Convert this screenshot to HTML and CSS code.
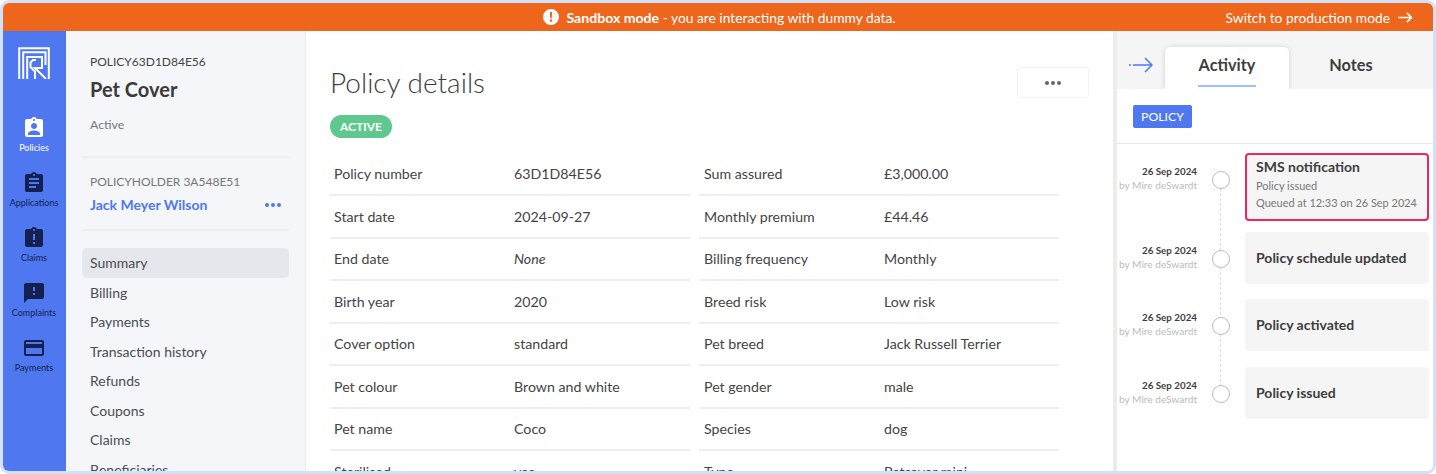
FILE: index.html
```html
<!DOCTYPE html>
<html lang="en">
<head>
<meta charset="UTF-8">
<meta name="viewport" content="width=device-width, initial-scale=1.0">
<title>Policy details</title>
<link rel="stylesheet" href="styles.css">
</head>
<body>
<div class="frame">

    <div class="banner">
        <span></span>
        <div class="banner-message">
            <svg class="banner-icon" viewBox="0 0 16 16"><path fill="#fff" fill-rule="evenodd" d="M8 0a8 8 0 1 0 0 16A8 8 0 0 0 8 0zM6.9 3h2.2l-.3 6.2H7.2L6.9 3zM8 10.300a1.300 1.300 0 1 1 0 2.600 1.300 1.300 0 0 1 0-2.600z"/></svg>
            <span><strong>Sandbox mode</strong> - you are interacting with dummy data.</span>
        </div>
        <a class="banner-link" href="#">Switch to production mode
            <svg class="banner-arrow" viewBox="0 0 16 12"><path fill="none" stroke="#fff" stroke-width="1.800" d="M0 6h14.500M9.500 1l5 5-5 5"/></svg>
        </a>
    </div>

    <div class="app">
        <nav class="rail">
            <svg class="logo" viewBox="0 0 32 32"><path fill="none" stroke="#fff" stroke-width="2" d="M1.200 32V1.200h29.600V32M5.200 32V5.200h22.300V18M9.200 32V10H24v11h-7l11 11M17 32v-7.500L12.500 20v-4.500l2.500-2.500h3"/></svg>
            <a class="rail-item rail-item-active" href="#">
                <svg viewBox="0 0 24 24"><path d="M19 3h-4.180C14.400 1.840 13.300 1 12 1c-1.300 0-2.400.84-2.820 2H5c-1.100 0-2 .9-2 2v14c0 1.100.9 2 2 2h14c1.100 0 2-.9 2-2V5c0-1.100-.9-2-2-2zm-7 0c.55 0 1 .45 1 1s-.45 1-1 1-1-.45-1-1 .45-1 1-1zm0 4c1.660 0 3 1.340 3 3s-1.340 3-3 3-3-1.340-3-3 1.340-3 3-3zm6 12H6v-1.400c0-2 4-3.100 6-3.100s6 1.100 6 3.100V19z"/></svg>
                Policies
            </a>
            <a class="rail-item" href="#">
                <svg viewBox="0 0 24 24"><path d="M19 3h-4.180C14.400 1.840 13.300 1 12 1c-1.300 0-2.400.84-2.820 2H5c-1.100 0-2 .9-2 2v14c0 1.100.9 2 2 2h14c1.100 0 2-.9 2-2V5c0-1.100-.9-2-2-2zm-7 0c.55 0 1 .45 1 1s-.45 1-1 1-1-.45-1-1 .45-1 1-1zm2 14H7v-2h7v2zm3-4H7v-2h10v2zm0-4H7V7h10v2z"/></svg>
                Applications
            </a>
            <a class="rail-item" href="#">
                <svg viewBox="0 0 24 24"><path d="M19 3h-4.180C14.400 1.840 13.300 1 12 1c-1.300 0-2.400.84-2.820 2H5c-1.100 0-2 .9-2 2v14c0 1.100.9 2 2 2h14c1.100 0 2-.9 2-2V5c0-1.100-.9-2-2-2zm-6 15h-2v-2h2v2zm0-4h-2V8h2v6zm-1-9c-.55 0-1-.45-1-1s.45-1 1-1 1 .45 1 1-.45 1-1 1z"/></svg>
                Claims
            </a>
            <a class="rail-item" href="#">
                <svg viewBox="0 0 24 24"><path d="M20 2H4c-1.100 0-1.990.9-1.990 2L2 22l4-4h14c1.100 0 2-.9 2-2V4c0-1.100-.9-2-2-2zm-7 12h-2v-2h2v2zm0-4h-2V6h2v4z"/></svg>
                Complaints
            </a>
            <a class="rail-item" href="#">
                <svg viewBox="0 0 24 24"><path d="M20 4H4c-1.110 0-1.990.89-1.990 2L2 18c0 1.110.89 2 2 2h16c1.110 0 2-.89 2-2V6c0-1.110-.89-2-2-2zm0 14H4v-6h16v6zm0-10H4V6h16v2z"/></svg>
                Payments
            </a>
        </nav>

        <aside class="subnav">
            <div class="subnav-head">
                <div class="policy-ref">POLICY63D1D84E56</div>
                <h2 class="policy-name">Pet Cover</h2>
                <div class="policy-state">Active</div>
            </div>
            <div class="holder">
                <div class="holder-ref">POLICYHOLDER 3A548E51</div>
                <div class="holder-row">
                    <a class="holder-name" href="#">Jack Meyer Wilson</a>
                    <span class="dots dots-blue"><i></i><i></i><i></i></span>
                </div>
            </div>
            <div class="subnav-links">
                <a class="subnav-link subnav-link-active" href="#">Summary</a>
                <a class="subnav-link" href="#">Billing</a>
                <a class="subnav-link" href="#">Payments</a>
                <a class="subnav-link" href="#">Transaction history</a>
                <a class="subnav-link" href="#">Refunds</a>
                <a class="subnav-link" href="#">Coupons</a>
                <a class="subnav-link" href="#">Claims</a>
                <a class="subnav-link" href="#">Beneficiaries</a>
            </div>
        </aside>

        <main class="details">
            <div class="details-head">
                <h1>Policy details</h1>
                <button class="more-btn"><span class="dots"><i></i><i></i><i></i></span></button>
            </div>
            <span class="badge">ACTIVE</span>
            <div class="fields">
                <div class="field"><span>Policy number</span><span>63D1D84E56</span></div>
                <div class="field"><span>Sum assured</span><span>£3,000.00</span></div>
                <div class="field"><span>Start date</span><span>2024-09-27</span></div>
                <div class="field"><span>Monthly premium</span><span>£44.46</span></div>
                <div class="field"><span>End date</span><span><em>None</em></span></div>
                <div class="field"><span>Billing frequency</span><span>Monthly</span></div>
                <div class="field"><span>Birth year</span><span>2020</span></div>
                <div class="field"><span>Breed risk</span><span>Low risk</span></div>
                <div class="field"><span>Cover option</span><span>standard</span></div>
                <div class="field"><span>Pet breed</span><span>Jack Russell Terrier</span></div>
                <div class="field"><span>Pet colour</span><span>Brown and white</span></div>
                <div class="field"><span>Pet gender</span><span>male</span></div>
                <div class="field"><span>Pet name</span><span>Coco</span></div>
                <div class="field"><span>Species</span><span>dog</span></div>
                <div class="field"><span>Sterilised</span><span>yes</span></div>
                <div class="field"><span>Type</span><span>Petsaver mini</span></div>
            </div>
        </main>

        <section class="activity">
            <div class="tabs">
                <svg class="collapse" viewBox="0 0 24 16"><path fill="none" stroke="#4f78f0" stroke-width="1.500" d="M4 8h19M16 1l7 7-7 7"/><circle cx="1" cy="8" r="1" fill="#4f78f0"/></svg>
                <div class="tab tab-active">Activity</div>
                <div class="tab">Notes</div>
            </div>
            <div class="filters"><span class="filter">POLICY</span></div>
            <div class="timeline">
                <div class="event">
                    <div class="event-meta"><b>26 Sep 2024</b><span>by Mire deSwardt</span></div>
                    <div class="event-node"></div>
                    <div class="event-card event-card-selected">
                        <h4>SMS notification</h4>
                        <p>Policy issued</p>
                        <p>Queued at 12:33 on 26 Sep 2024</p>
                    </div>
                </div>
                <div class="event">
                    <div class="event-meta"><b>26 Sep 2024</b><span>by Mire deSwardt</span></div>
                    <div class="event-node"></div>
                    <div class="event-card"><h4>Policy schedule updated</h4></div>
                </div>
                <div class="event">
                    <div class="event-meta"><b>26 Sep 2024</b><span>by Mire deSwardt</span></div>
                    <div class="event-node"></div>
                    <div class="event-card"><h4>Policy activated</h4></div>
                </div>
                <div class="event event-last">
                    <div class="event-meta"><b>26 Sep 2024</b><span>by Mire deSwardt</span></div>
                    <div class="event-node"></div>
                    <div class="event-card"><h4>Policy issued</h4></div>
                </div>
            </div>
        </section>
    </div>
</div>
</body>
</html>
```

FILE: styles.css
```css
* {
    box-sizing: border-box;
}
body {
    margin: 0;
    background-color: #fff;
    font-family: Lato, "Liberation Sans", sans-serif;
    color: #3d3d3d;
}
a {
    color: inherit;
    text-decoration: none;
}
.frame {
    width: 1436px;
    height: 474px;
    display: flex;
    flex-direction: column;
    border: 3px solid #d3e0fa;
    border-radius: 9px;
    overflow: hidden;
}

/* top banner */
.banner {
    flex: none;
    height: 28px;
    display: grid;
    grid-template-columns: 1fr auto 1fr;
    align-items: center;
    background-color: #ee661c;
    color: #fff;
    font-size: 13.800px;
}
.banner strong {
    font-size: 14.100px;
}
.banner-message {
    display: flex;
    align-items: center;
    gap: 7px;
    margin-left: 3px;
}
.banner-icon {
    width: 16px;
    height: 16px;
}
.banner-link {
    justify-self: end;
    display: flex;
    align-items: center;
    gap: 8px;
    padding-right: 20px;
}
.banner-arrow {
    width: 15px;
    height: 11px;
}

.app {
    flex: 1;
    min-height: 0;
    display: flex;
}

/* blue icon rail */
.rail {
    flex: none;
    width: 63px;
    padding-right: 1px;
    display: flex;
    flex-direction: column;
    align-items: center;
    background-color: #4f78f0;
}
.logo {
    width: 32px;
    height: 32px;
    margin-top: 16px;
    margin-bottom: 25px;
}
.rail-item {
    height: 55px;
    display: flex;
    flex-direction: column;
    align-items: center;
    color: #14204f;
    font-size: 9px;
    line-height: 12px;
    gap: 2px;
    padding-top: 12px;
}
.rail-item svg {
    width: 24px;
    height: 24px;
    fill: #14204f;
}
.rail-item-active {
    color: #fff;
}
.rail-item-active svg {
    fill: #fff;
}

/* policy sub navigation */
.subnav {
    flex: none;
    width: 240px;
    padding: 0 16px;
    background-color: #f5f6f9;
    border-right: 1px solid #e9ebf0;
    overflow: hidden;
}
.subnav-head {
    height: 127px;
    padding: 23px 8px 0;
    border-bottom: 2px solid #eceef2;
}
.policy-ref {
    font-size: 12px;
    line-height: 16px;
    color: #444;
}
.policy-name {
    margin: 7px 0 0;
    font-size: 20px;
    line-height: 24px;
    font-weight: 700;
    color: #3a3a3a;
}
.policy-state {
    margin-top: 16px;
    font-size: 12.300px;
    line-height: 16px;
    color: #777;
}
.holder {
    height: 73px;
    padding: 16px 8px 0;
    border-bottom: 2px solid #eceef2;
}
.holder-ref {
    font-size: 12px;
    line-height: 16px;
    color: #777;
}
.holder-row {
    display: flex;
    align-items: center;
    justify-content: space-between;
    margin-top: 5px;
}
.holder-name {
    font-size: 14px;
    line-height: 20px;
    font-weight: 700;
    color: #4f78f0;
}
.dots {
    display: inline-flex;
    gap: 2px;
}
.dots i {
    width: 4px;
    height: 4px;
    border-radius: 50%;
    background-color: #666;
}
.dots-blue i {
    background-color: #4f78f0;
}
.subnav-links {
    margin-top: 17px;
    display: flex;
    flex-direction: column;
}
.subnav-link {
    flex: none;
    height: 29.500px;
    line-height: 30px;
    padding-left: 8px;
    font-size: 14px;
    color: #4a4d52;
    border-radius: 5px;
}
.subnav-link-active {
    background-color: #e5e7ec;
}

/* middle column */
.details {
    flex: 1;
    min-width: 0;
    padding: 36px 24px 0 24px;
    background-color: #fff;
    overflow: hidden;
}
.details-head {
    display: flex;
    align-items: center;
    justify-content: space-between;
    height: 31px;
}
.details-head h1 {
    margin: 0 0 2px;
    font-size: 28px;
    line-height: 32px;
    font-weight: 300;
    color: #3d3d3d;
}
.more-btn {
    width: 72px;
    height: 31px;
    background-color: #fff;
    border: 1px solid #f3f3f3;
    border-radius: 3px;
    display: flex;
    align-items: center;
    justify-content: center;
    padding: 0;
}
.badge {
    display: block;
    width: 62px;
    height: 23px;
    margin-top: 17px;
    background-color: #5fc88f;
    color: #fff;
    border-radius: 12px;
    font-size: 12px;
    font-weight: 700;
    line-height: 23px;
    text-align: center;
}
.fields {
    width: 729px;
    margin-top: 15.500px;
    display: grid;
    grid-template-columns: 360px 360px;
    column-gap: 9px;
}
.field {
    height: 42.500px;
    display: grid;
    grid-template-columns: 180px 1fr;
    align-items: center;
    padding-left: 4px;
    font-size: 14.200px;
    color: #444;
    border-bottom: 2px solid #eeeeee;
}
.field:nth-child(even) {
    padding-left: 5px;
}

/* right column */
.activity {
    flex: none;
    width: 320px;
    border-left: 4px solid #ececec;
    display: flex;
    flex-direction: column;
    background-color: #fff;
}
.tabs {
    flex: none;
    height: 58px;
    display: flex;
    align-items: flex-end;
    background-color: #f5f5f5;
    padding-left: 48px;
    position: relative;
}
.collapse {
    position: absolute;
    left: 12px;
    top: 26px;
    width: 24px;
    height: 16px;
}
.tab {
    width: 124px;
    height: 42px;
    line-height: 36px;
    text-align: center;
    font-size: 16.300px;
    font-weight: 700;
    color: #3d3d3d;
    border-radius: 5px 5px 0 0;
}
.tab-active {
    position: relative;
    background-color: #fff;
    box-shadow: 0 0 5px rgba(0, 0, 0, 0.15);
    clip-path: inset(-6px -6px 0 -6px);
}
.tab-active::after {
    content: "";
    position: absolute;
    left: 33px;
    right: 33px;
    bottom: 2px;
    height: 2px;
    background-color: #a3bcfb;
}
.filters {
    flex: none;
    height: 55px;
    padding: 16px 0 0 16px;
    border-bottom: 1px solid #e6e6e6;
}
.filter {
    display: block;
    width: 59px;
    height: 23px;
    line-height: 23px;
    text-align: center;
    background-color: #4f78f0;
    color: #fff;
    font-size: 12.300px;
    border-radius: 2px;
}
.timeline {
    padding: 9px 4px 0 0;
}
.event {
    display: grid;
    grid-template-columns: 80px 48px 184px;
    margin-bottom: 10.500px;
    position: relative;
}
.event + .event {
    margin-bottom: 15.900px;
}
.event-meta {
    display: flex;
    flex-direction: column;
    align-items: flex-end;
    font-size: 10.100px;
    line-height: 14px;
    white-space: nowrap;
    color: #bbb;
    padding-top: 11px;
}
.event-meta b {
    font-size: 9.800px;
    color: #3d3d3d;
    font-weight: 700;
}
.event-node {
    position: relative;
}
.event-node::before {
    content: "";
    position: absolute;
    left: 15px;
    top: 18px;
    width: 16px;
    height: 16px;
    background-color: #fff;
    border: 1px solid #bbb;
    border-radius: 50%;
    z-index: 1;
}
.event-node::after {
    content: "";
    position: absolute;
    left: 23px;
    top: 30px;
    height: 68px;
    border-left: 1px dashed #ddd;
}
.event-last .event-node::after {
    display: none;
}
.event-card {
    height: 52px;
    display: flex;
    flex-direction: column;
    justify-content: center;
    padding: 0 11px;
    background-color: #f5f5f5;
    border-radius: 4px;
}
.event-card h4 {
    margin: 0;
    font-size: 14px;
    line-height: 18px;
    font-weight: 700;
    color: #3d3d3d;
}
.event-card p {
    margin: 0;
    font-size: 10.950px;
    line-height: 17px;
    white-space: nowrap;
    color: #777;
}
.event-card-selected {
    height: 68px;
    border: 2px solid #f0245f;
    padding: 3px 9px 0;
    justify-content: flex-start;
}
.event-card-selected h4 {
    margin-bottom: 1px;
}
```
